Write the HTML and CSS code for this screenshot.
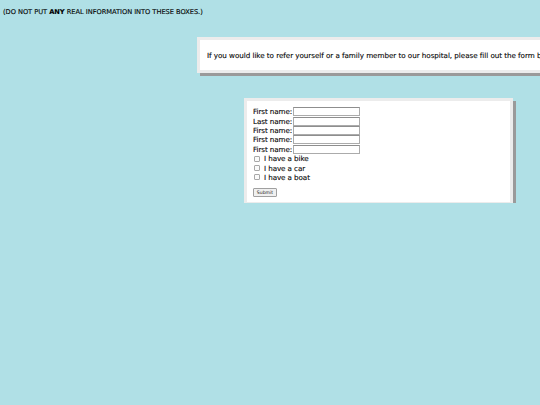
FILE: index.html
```html
<!DOCTYPE html>
<html>
<head>
<meta charset="utf-8">
<title>Referral form</title>
<link rel="stylesheet" href="styles.css">
</head>
<body>
<p class="note">(Do not put <b>any</b> real information into these boxes.)</p>
<div class="intro">
  <p class="intro-text">If you would like to refer yourself or a family member to our hospital, please fill out the form below.</p>
</div>
<form class="card">
  <div class="row"><span class="label">First name:</span><input class="field" type="text"></div>
  <div class="row"><span class="label">Last name:</span><input class="field" type="text"></div>
  <div class="row"><span class="label">First name:</span><input class="field" type="text"></div>
  <div class="row"><span class="label">First name:</span><input class="field" type="text"></div>
  <div class="row"><span class="label">First name:</span><input class="field" type="text"></div>
  <label class="row check"><input class="box" type="checkbox"> I have a bike</label>
  <label class="row check"><input class="box" type="checkbox"> I have a car</label>
  <label class="row check"><input class="box" type="checkbox"> I have a boat</label>
  <button class="submit" type="button">Submit</button>
</form>
</body>
</html>
```
FILE: styles.css
```css
html {
  overflow: hidden;
}
body {
  margin: 0;
  background: #b0e0e6;
  font-family: "DejaVu Sans", "Liberation Sans", sans-serif;
  color: #000;
  -webkit-text-stroke: 0.1px #000;
}
.note {
  margin: 0;
  padding: 8px 0 0 3px;
  font-size: 6.7px;
  line-height: 8px;
  text-transform: uppercase;
  letter-spacing: -0.05px;
}
.note b {
  font-weight: bold;
}
.intro {
  margin: 21px 0 0 197px;
  width: 420px;
  height: 30px;
  background: #fff;
  border: 3px solid #ececec;
  box-shadow: 3px 3px 0 #9a9a9a;
  display: flex;
  align-items: center;
  white-space: nowrap;
}
.intro-text {
  margin: 0 0 0 7px;
  font-size: 7.2px;
  letter-spacing: -0.05px;
}
.card {
  margin: 25px 0 0 244px;
  box-sizing: content-box;
  width: 257px;
  height: 95px;
  padding: 6px 0 0 6px;
  background: #fff;
  border: 3px solid #ececec;
  border-bottom-width: 1px;
  box-shadow: 3px 3px 0 #9a9a9a;
  display: flex;
  flex-direction: column;
}
.row {
  display: flex;
  align-items: center;
  height: 9.4px;
  font-size: 7.2px;
  letter-spacing: -0.1px;
}
.label {
  width: 39.5px;
}
.field {
  margin: 0;
  padding: 0;
  width: 67px;
  height: 9px;
  box-sizing: border-box;
  border: 1px solid #ababab;
  border-top-color: #8e8e8e;
  background: #fff;
}
.check {
  padding-left: 1px;
}
.box {
  -webkit-appearance: none;
  appearance: none;
  margin: 0 4px 0 0;
  width: 6px;
  height: 6px;
  box-sizing: border-box;
  border: 1px solid #a8a8a8;
  border-radius: 1px;
  background: #fafafa;
}
.submit {
  margin: 5.5px 0 0 0;
  padding: 0;
  width: 24px;
  height: 9px;
  font-family: "DejaVu Sans", sans-serif;
  font-size: 4.6px;
  color: #222;
  -webkit-text-stroke: 0;
  background: #f0f0f0;
  border: 1px solid #a0a0a0;
  border-radius: 1px;
}
```
